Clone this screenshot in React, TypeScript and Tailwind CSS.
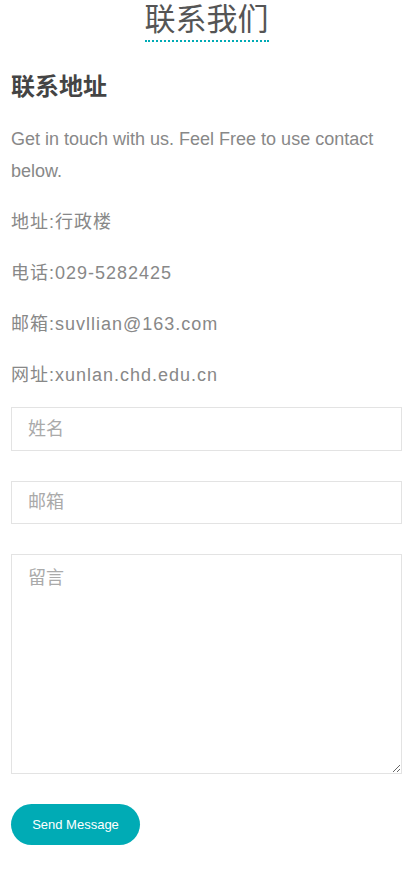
export default function App() {
  return (
    <main className="w-[413px] min-h-[869px] bg-white px-[11px] font-['Liberation_Sans','Noto_Sans_CJK_SC',sans-serif]">
      {/* Page title */}
      <div className="flex justify-center">
        <h1 className="text-[31px] leading-[40px] text-[#555] border-b-2 border-dotted border-[#00abb5] pb-0">
          联系我们
        </h1>
      </div>

      {/* Contact info */}
      <h2 className="mt-[29px] text-[24px] leading-[32px] font-bold text-[#444]">联系地址</h2>
      <p className="mt-[20px] text-[18px] leading-[32px] text-[#888]">
        Get in touch with us. Feel Free to use contact below.
      </p>
      <div className="mt-[19px] flex flex-col gap-[19px] text-[18px] leading-[32px] text-[#888] tracking-[1px]">
        <p>地址:行政楼</p>
        <p>电话:029-5282425</p>
        <p>邮箱:suvllian@163.com</p>
        <p>网址:xunlan.chd.edu.cn</p>
      </div>

      {/* Form */}
      <form className="mt-[16px] flex flex-col">
        <input
          placeholder="姓名"
          className="h-[44px] w-full border border-[#e3e3e3] px-[16px] text-[18px] text-[#555] placeholder:text-[#aaa] outline-none"
        />
        <input
          placeholder="邮箱"
          className="mt-[30px] h-[43px] w-full border border-[#e3e3e3] px-[16px] text-[18px] text-[#555] placeholder:text-[#aaa] outline-none"
        />
        <textarea
          placeholder="留言"
          className="mt-[30px] h-[220px] w-full border border-[#e3e3e3] px-[16px] py-[10px] text-[18px] text-[#555] placeholder:text-[#aaa] outline-none"
        />
        <div className="mt-[30px]">
          <button
            type="button"
            className="h-[41px] w-[129px] rounded-full bg-[#00abb5] text-[13px] text-white"
          >
            Send Message
          </button>
        </div>
      </form>
    </main>
  );
}
